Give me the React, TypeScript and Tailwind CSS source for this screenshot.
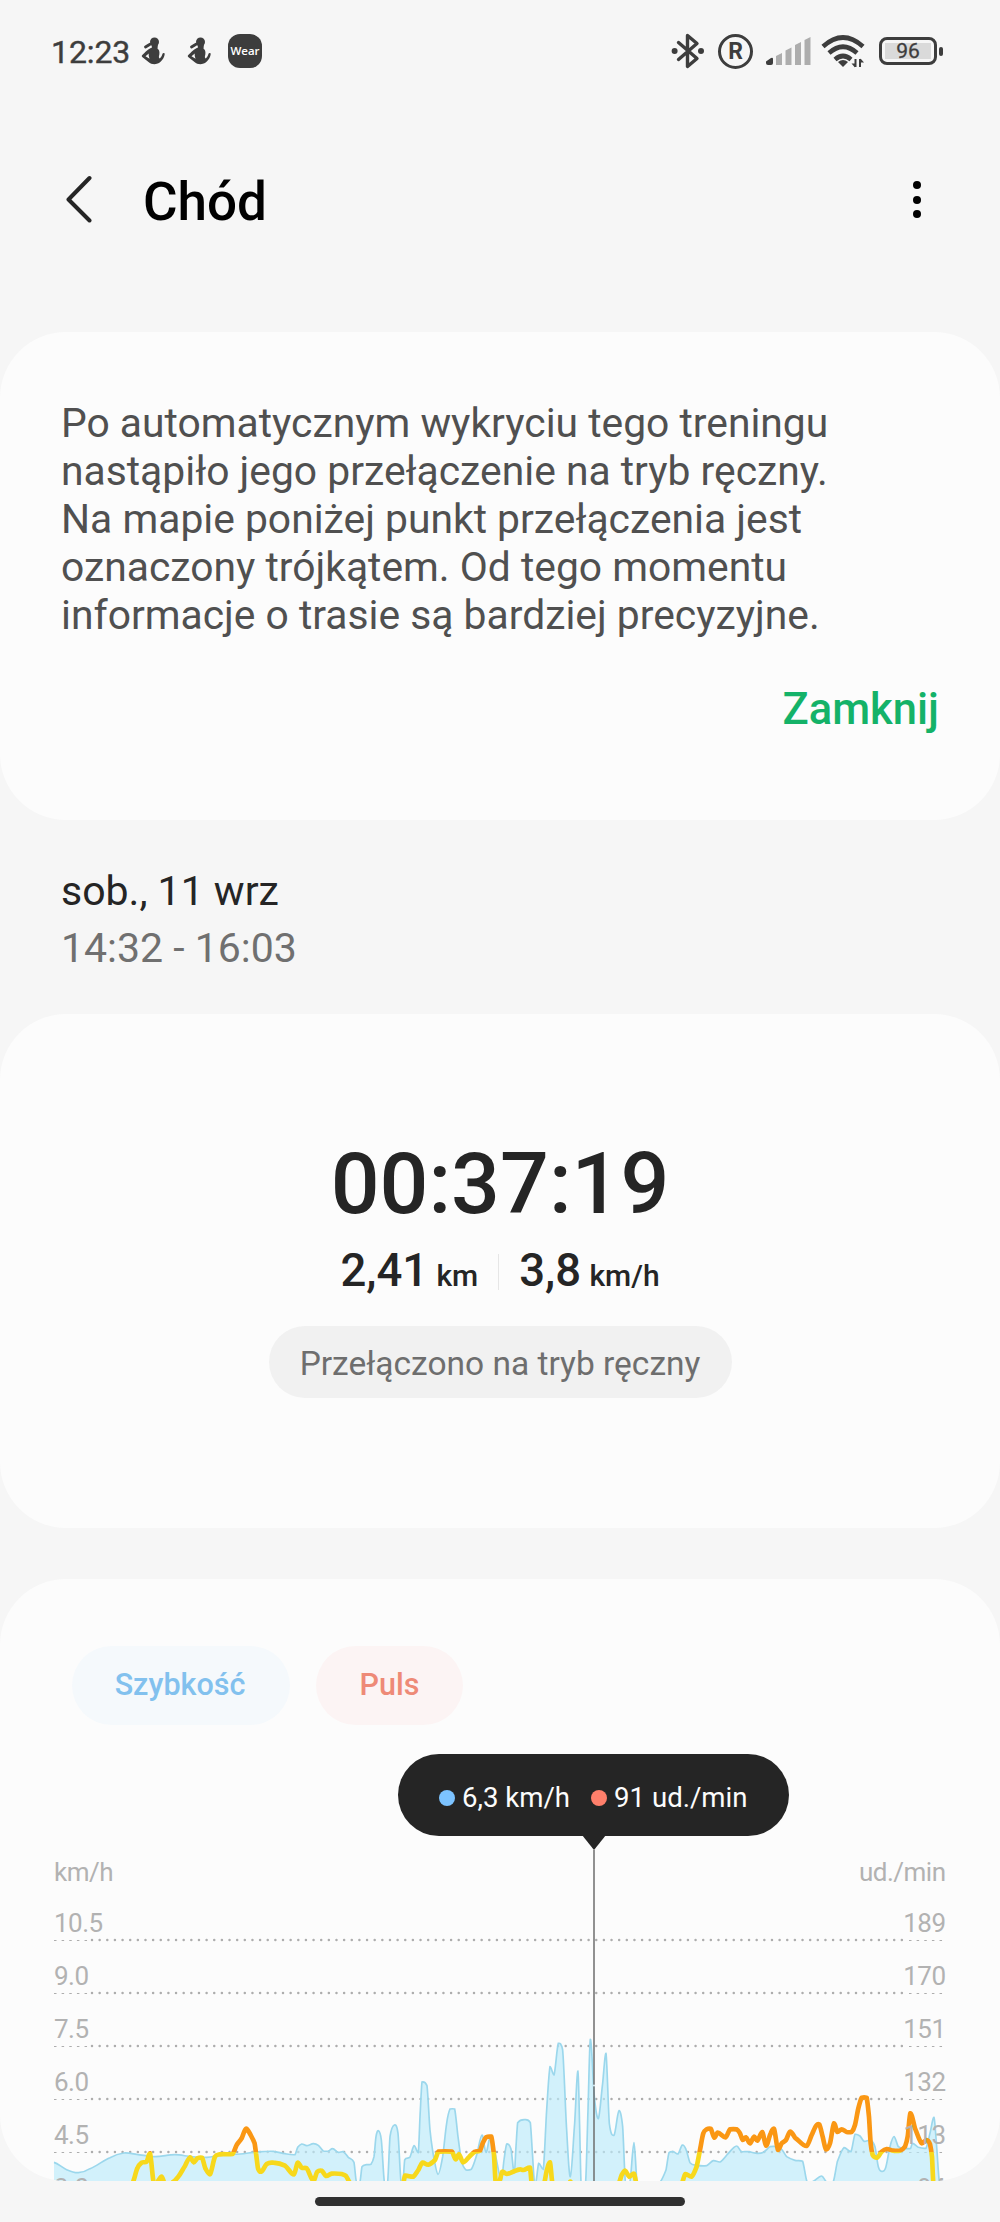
import { useMemo } from "react";

type Point = [number, number];

// Plot coordinates: 3 units per pixel, the plot group is scaled down when drawn.
const PLOT_BOTTOM = 543;

const speedSegments: Point[][] = [
  [[162, 487], [200, 509], [235, 518], [270, 506], [330, 473], [372, 459], [410, 463], [465, 470], [525, 464], [575, 470], [620, 472], [670, 464], [720, 462], [770, 456], [820, 454], [855, 461], [885, 464], [893, 442], [905, 432], [920, 437], [940, 431], [955, 436], [970, 453], [985, 453], [998, 446], [1015, 457], [1030, 455], [1045, 472], [1062, 487], [1069, 545]],
  [[1080, 545], [1086, 500], [1100, 494], [1113, 493], [1122, 470], [1128, 410], [1135, 392], [1144, 420], [1153, 545]],
  [[1163, 545], [1170, 410], [1183, 375], [1194, 400], [1203, 545]],
  [[1209, 545], [1214, 480], [1230, 471], [1242, 437], [1255, 458], [1260, 350], [1266, 246], [1281, 257], [1290, 390], [1300, 465], [1314, 523], [1328, 470], [1340, 370], [1350, 327], [1364, 327], [1374, 410], [1385, 485], [1398, 510], [1414, 508], [1430, 465], [1446, 405], [1458, 457], [1471, 410], [1485, 460], [1504, 540], [1512, 480], [1520, 432], [1533, 447], [1543, 518], [1548, 440], [1553, 368], [1575, 359], [1591, 368], [1598, 470], [1603, 545]],
  [[1608, 545], [1616, 490], [1630, 508], [1640, 330], [1650, 200], [1662, 225], [1675, 130], [1688, 150], [1700, 390], [1711, 530], [1724, 370], [1734, 213], [1739, 380], [1743, 545]],
  [[1757, 545], [1764, 330], [1771, 118], [1783, 290], [1795, 356], [1808, 250], [1818, 160], [1828, 370], [1842, 406], [1857, 332], [1868, 380], [1876, 545]],
  [[1890, 545], [1902, 428], [1911, 545]],
  [[1981, 545], [1998, 510], [2007, 458], [2020, 455], [2034, 462], [2047, 435], [2058, 448], [2070, 488], [2090, 496], [2120, 497], [2140, 482], [2160, 486], [2185, 460], [2210, 438], [2224, 455], [2245, 455], [2272, 460], [2292, 456], [2310, 440], [2330, 440], [2345, 448], [2360, 470], [2385, 481], [2408, 484], [2421, 545]],
  [[2438, 545], [2465, 528], [2479, 545]],
  [[2500, 545], [2512, 485], [2532, 443], [2553, 455], [2565, 403], [2580, 408], [2592, 424], [2612, 420], [2625, 440], [2635, 500], [2645, 514], [2657, 503], [2670, 440], [2682, 410], [2695, 440], [2715, 445], [2732, 445], [2737, 430], [2755, 442], [2778, 445], [2790, 400], [2802, 352], [2810, 440], [2818, 545]],
];

const pulseSegments: Point[][] = [
  [[398, 548], [412, 505], [425, 488], [440, 485], [450, 460], [461, 548]],
  [[470, 548], [485, 530], [493, 548]],
  [[516, 548], [535, 530], [555, 498], [570, 472], [581, 487], [592, 475], [606, 473], [616, 505], [630, 523], [645, 470], [660, 463], [698, 462], [710, 435], [725, 415], [738, 386], [752, 405], [764, 430], [768, 460], [774, 505], [784, 515], [800, 492], [820, 488], [855, 497], [882, 523], [893, 488], [905, 503], [920, 505], [940, 542], [952, 515], [965, 512], [978, 528], [995, 521], [1025, 522], [1038, 528], [1050, 548]],
  [[1210, 548], [1215, 527], [1240, 530], [1255, 510], [1267, 488], [1285, 494], [1305, 480], [1315, 455], [1356, 455], [1367, 478], [1377, 463], [1389, 487], [1408, 470], [1425, 455], [1440, 452], [1448, 430], [1458, 412], [1474, 410], [1482, 465], [1487, 548], [1497, 548], [1507, 515], [1520, 522], [1545, 513], [1560, 508], [1570, 510], [1590, 503], [1595, 548]],
  [[1633, 548], [1640, 512], [1650, 487], [1657, 548]],
  [[1706, 548], [1711, 545], [1716, 548]],
  [[1857, 548], [1865, 525], [1876, 512], [1887, 530], [1902, 521], [1909, 548]],
  [[2046, 548], [2056, 522], [2075, 530], [2090, 500], [2100, 450], [2110, 400], [2120, 388], [2132, 386], [2143, 413], [2153, 398], [2177, 412], [2190, 388], [2210, 388], [2220, 400], [2228, 420], [2238, 412], [2250, 430], [2262, 410], [2272, 422], [2287, 396], [2298, 437], [2312, 400], [2322, 386], [2334, 450], [2345, 430], [2358, 420], [2370, 395], [2385, 413], [2420, 438], [2435, 405], [2450, 375], [2458, 373], [2468, 410], [2478, 448], [2490, 430], [2502, 370], [2512, 396], [2525, 388], [2540, 396], [2555, 396], [2565, 375], [2575, 325], [2585, 293], [2600, 293], [2607, 350], [2612, 430], [2618, 465], [2632, 473], [2645, 455], [2660, 447], [2680, 452], [2700, 452], [2715, 440], [2723, 410], [2731, 340], [2745, 385], [2765, 430], [2780, 420], [2790, 432], [2796, 470], [2800, 548]],
];

const axisRows = [
  { speed: "10.5", pulse: "189", y: 90 },
  { speed: "9.0", pulse: "170", y: 143 },
  { speed: "7.5", pulse: "151", y: 196 },
  { speed: "6.0", pulse: "132", y: 249 },
  { speed: "4.5", pulse: "113", y: 302 },
  { speed: "3.0", pulse: "94", y: 355 },
];

// Catmull-Rom through the points, with control points held inside each step's y range
function smooth(points: Point[]) {
  let d = `M${points[0][0]} ${points[0][1]}`;
  for (let i = 0; i < points.length - 1; i++) {
    const p0 = points[i - 1] || points[i];
    const p1 = points[i];
    const p2 = points[i + 1];
    const p3 = points[i + 2] || p2;
    const lo = Math.min(p1[1], p2[1]) - 1;
    const hi = Math.max(p1[1], p2[1]) + 1;
    const hold = (y: number) => Math.max(lo, Math.min(hi, y));
    const dx = (p2[0] - p1[0]) / 3;
    const c1y = hold(p1[1] + (p2[1] - p0[1]) / 6);
    const c2y = hold(p2[1] - (p3[1] - p1[1]) / 6);
    d += `C${p1[0] + dx} ${c1y} ${p2[0] - dx} ${c2y} ${p2[0]} ${p2[1]}`;
  }
  return d;
}

function WorkoutIcon() {
  return (
    <svg width="24" height="28" viewBox="0 0 24 28" fill="#3d3d3d">
      <circle cx="13.5" cy="5" r="4.5" />
      <path d="M10.5 6 11 12h5.500l.500-6Z" />
      <path d="M4.500 10 9 7.200" stroke="#3d3d3d" strokeWidth="2.800" strokeLinecap="round" />
      <path
        fillRule="evenodd"
        d="M10.500 10.800c-3 .8-6.500 4.800-9.200 7.200-.8.700-.6 1.700.2 2.300l6 4.700c1.800 1.600 3.500 2.200 6 2.200 3.600 0 5.800-1.400 8-4.600 1.300-1.900 2.100-3.800 2.200-5.600.1-1.400-1.800-1.500-2.200-.2-.6 2-1.400 3.800-2.700 4.700-1-.6-1-1.500-.8-2.500.7-2.500.6-4.800-.3-6.200-1.200-1.700-4.500-2.500-7.200-2ZM7.800 16.500c-.3 1.600 0 3.300.8 5.200L4.500 19.200Z"
      />
    </svg>
  );
}

function BluetoothIcon() {
  return (
    <svg width="34" height="38" viewBox="0 0 34 38" fill="none" stroke="#3d3d3d" strokeWidth="3.400" strokeLinecap="round" strokeLinejoin="round">
      <path d="M7.500 10.500 26 26.500 16.500 34.500V3.500L26 11.500 7.500 27.500" />
      <circle cx="3.600" cy="19" r="3" fill="#3d3d3d" stroke="none" />
      <circle cx="30" cy="19" r="3" fill="#3d3d3d" stroke="none" />
    </svg>
  );
}

function SignalIcon() {
  return (
    <svg width="46" height="30" viewBox="0 0 46 30" fill="#adadad">
      <path d="M1 25.500 6 22q2-.8 2 1v4q0 2-2 2H3q-2 0-2-2Z" fill="#3d3d3d" />
      <path d="M11 20 17 17v12H11Z" />
      <path d="M20.500 14.500 26.500 11.500V29h-6Z" />
      <path d="M30 9 36 6v23H30Z" />
      <path d="M39.500 4 45.500 1v28h-6Z" />
    </svg>
  );
}

function WifiIcon() {
  return (
    <svg width="44" height="34" viewBox="0 0 44 34" fill="none" stroke="#3d3d3d" strokeWidth="4.600">
      <path d="M2 12.500Q22-5.500 42 12.500" />
      <path d="M8 19Q22 6.500 36 19" />
      <path d="M14 25.500Q22 18.500 30 25.500" />
      <path d="M17 28q5-4 10 0l-5 5Z" fill="#3d3d3d" stroke="none" />
      <path d="M34.500 25v8M39 33v-8" strokeWidth="2" />
      <path d="M34 33.500 30.500 29.500H34ZM39.500 24.500 43 28.500H39.500Z" fill="#3d3d3d" stroke="none" />
    </svg>
  );
}

function StatusBar() {
  return (
    <div className="flex h-[102px] items-center justify-between pl-[51px] pr-[57px] text-[#3d3d3d]">
      <div className="flex items-center">
        <span className="w-[90px] pt-px text-[32px] leading-none tracking-[-0.1px] [-webkit-text-stroke:0.4px_#3d3d3d]">12:23</span>
        <span className="w-[46px]"><WorkoutIcon /></span>
        <span className="w-[41px]"><WorkoutIcon /></span>
        <span className="flex h-[34px] w-[34px] items-center justify-center rounded-[12px] bg-[#3d3d3d] font-['Open_Sans'] text-[11.5px] font-semibold text-white">
          Wear
        </span>
      </div>
      <div className="flex items-center">
        <BluetoothIcon />
        <span className="ml-[13px] flex h-[35px] w-[35px] items-center justify-center rounded-full border-[3px] border-[#3d3d3d] text-[23px] font-bold leading-none">
          R
        </span>
        <span className="ml-[12px]"><SignalIcon /></span>
        <span className="ml-[10px]"><WifiIcon /></span>
        <span className="ml-[14px] flex h-[28px] w-[58px] rounded-[8px] border-[3.5px] border-[#3d3d3d] p-[3px]">
          <span className="flex flex-1 items-center justify-center bg-[#dadada] pt-px text-[21px] leading-none [-webkit-text-stroke:0.3px_#3d3d3d]">96</span>
        </span>
        <span className="ml-[2px] h-[9px] w-[4px] rounded-full bg-[#3d3d3d]" />
      </div>
    </div>
  );
}

function Header() {
  return (
    <header className="flex h-[230px] items-start justify-between pl-[66px] pr-[79px] pt-[73px]">
      <div className="flex items-start">
        <svg width="26" height="48" viewBox="0 0 26 48" fill="none" stroke="#252525" strokeWidth="4" strokeLinecap="round" strokeLinejoin="round">
          <path d="M23.500 3 2.500 24.500 23.500 45.500" />
        </svg>
        <h1 className="ml-[51px] text-[53px] font-medium leading-[54px] text-black">Chód</h1>
      </div>
      <div className="mt-[6px] flex flex-col gap-[6.5px]">
        <span className="h-[8px] w-[8px] rounded-full bg-black" />
        <span className="h-[8px] w-[8px] rounded-full bg-black" />
        <span className="h-[8px] w-[8px] rounded-full bg-black" />
      </div>
    </header>
  );
}

function WorkoutChart() {
  const speed = useMemo(() => speedSegments.map(smooth), []);
  const pulse = useMemo(() => pulseSegments.map(smooth), []);

  return (
    <svg width="1000" height="331" viewBox="0 0 1000 331" className="block">
      <defs>
        <linearGradient id="pulseZones" gradientUnits="userSpaceOnUse" x1="0" y1="0" x2="0" y2={PLOT_BOTTOM}>
          <stop offset="0.838" stopColor="#fa9714" />
          <stop offset="0.838" stopColor="#f7d81c" />
        </linearGradient>
      </defs>

      {/* Grid */}
      {axisRows.slice(0, 5).map((row) => (
        <g key={row.speed} stroke="#adadad">
          <path d={`M54 ${row.y + 0.5}H88M909 ${row.y + 0.5}H943`} strokeWidth="1" strokeDasharray="2.500 5.140" />
          <path d={`M92 ${row.y}H904`} strokeWidth="2.500" strokeLinecap="round" strokeDasharray="0.010 7.630" />
        </g>
      ))}

      {/* Speed area and pulse line */}
      <g transform="translate(0 150) scale(0.33333)">
        {speed.map((d, idx) => (
          <g key={idx}>
            <path
              d={`${d}V545H${speedSegments[idx][0][0]}Z`}
              fill="#bcebfb"
              fillOpacity="0.650"
            />
            <path d={d} fill="none" stroke="#9bd7ec" strokeWidth="5" />
          </g>
        ))}
        {pulse.map((d, idx) => (
          <path key={idx} d={d} fill="none" stroke="url(#pulseZones)" strokeWidth="14" strokeLinejoin="round" />
        ))}
      </g>

      {/* Cursor */}
      <path d="M594 0V331" stroke="#6e6e6e" strokeWidth="1.500" />
      <circle cx="594" cy="235.500" r="1" fill="#dff4fb" />

      {/* Axis labels */}
      <g fill="#b2b2b2" fontSize="26" letterSpacing="-0.5">
        <text x="54" y="31">km/h</text>
        <text x="945.500" y="31" textAnchor="end">ud./min</text>
        {axisRows.map((row) => (
          <g key={row.speed}>
            <text x="54" y={row.y - 8}>{row.speed}</text>
            <text x="945.500" y={row.y - 8} textAnchor="end">{row.pulse}</text>
          </g>
        ))}
      </g>
    </svg>
  );
}

export default function App() {
  return (
    <div className="flex h-[2222px] w-[1000px] flex-col overflow-hidden bg-[#f6f6f6] font-[Roboto,sans-serif] text-[#252525]">
      <StatusBar />
      <Header />

      {/* Notice */}
      <section className="flex h-[488px] flex-col rounded-[66px] bg-[#fcfcfc] px-[61px] pt-[67px]">
        <p className="text-[40.8px] leading-[48px] text-[#505050]">
          Po automatycznym wykryciu tego treningu<br />
          nastąpiło jego przełączenie na tryb ręczny.<br />
          Na mapie poniżej punkt przełączenia jest<br />
          oznaczony trójkątem. Od tego momentu<br />
          informacje o trasie są bardziej precyzyjne.
        </p>
        <button className="mt-[45px] self-end text-[43.5px] font-medium leading-[52px] text-[#14b268]">
          Zamknij
        </button>
      </section>

      <div className="h-[194px] px-[61px] pt-[47px]">
        <p className="text-[41px] leading-[48px]">sob., 11 wrz</p>
        <p className="mt-[9px] text-[41px] leading-[48px] text-[#707070]">14:32 - 16:03</p>
      </div>

      {/* Summary */}
      <section className="flex h-[514px] flex-col items-center rounded-[66px] bg-[#fcfcfc] pt-[120px]">
        <p className="text-[86px] font-medium leading-[100px]">00:37:19</p>
        <div className="mt-[7px] flex items-center font-medium">
          <p className="text-[45.5px] leading-[60px]">
            2,41 <span className="-ml-[3px] text-[30px]">km</span>
          </p>
          <span className="mb-[4px] ml-[20px] mr-[20px] h-[36px] w-px bg-[#e6e6e6]" />
          <p className="text-[45.5px] leading-[60px]">
            3,8 <span className="-ml-[3px] text-[30px]">km/h</span>
          </p>
        </div>
        <div className="mt-[20px] flex h-[72px] w-[463px] items-center justify-center rounded-full bg-[#f1f1f1] pt-[4px] text-[33.5px] text-[#6e6e6e]">
          Przełączono na tryb ręczny
        </div>
      </section>

      {/* Chart */}
      <section className="mt-[51px] h-[602px] shrink-0 overflow-hidden rounded-[66px] bg-[#fcfcfc] pt-[67px]">
        <div className="flex gap-[26px] pl-[72px] text-[30.5px] font-medium">
          <span className="flex h-[79px] w-[218px] items-center justify-center rounded-full bg-[#f5f9fc] pb-px pr-[2px] text-[#82c1ee]">Szybkość</span>
          <span className="flex h-[79px] w-[147px] items-center justify-center rounded-full bg-[#fcf4f4] pb-px text-[#ee8a77]">Puls</span>
        </div>
        <div className="ml-[398px] mt-[29px] flex h-[96px] w-[391px] flex-col items-center">
          <div className="flex h-[82px] w-full shrink-0 items-center rounded-full bg-[#252525] pl-[41px] pt-[5px] text-[27.6px] text-[#fcfcfc]">
            <span className="mr-[7px] h-[16px] w-[16px] rounded-full bg-[#7cc3ff]" />
            6,3 km/h
            <span className="ml-[21px] mr-[7px] h-[16px] w-[16px] rounded-full bg-[#ff7f6b]" />
            91 ud./min
          </div>
          <svg width="24" height="15" viewBox="0 0 24 15" className="-mt-px shrink-0">
            <path d="M0 0h24L12 15Z" fill="#252525" />
          </svg>
        </div>
        <WorkoutChart />
      </section>

      {/* Gesture bar */}
      <div className="mt-4 flex justify-center">
        <span className="h-[9px] w-[370px] rounded-full bg-[#303030]" />
      </div>
    </div>
  );
}
